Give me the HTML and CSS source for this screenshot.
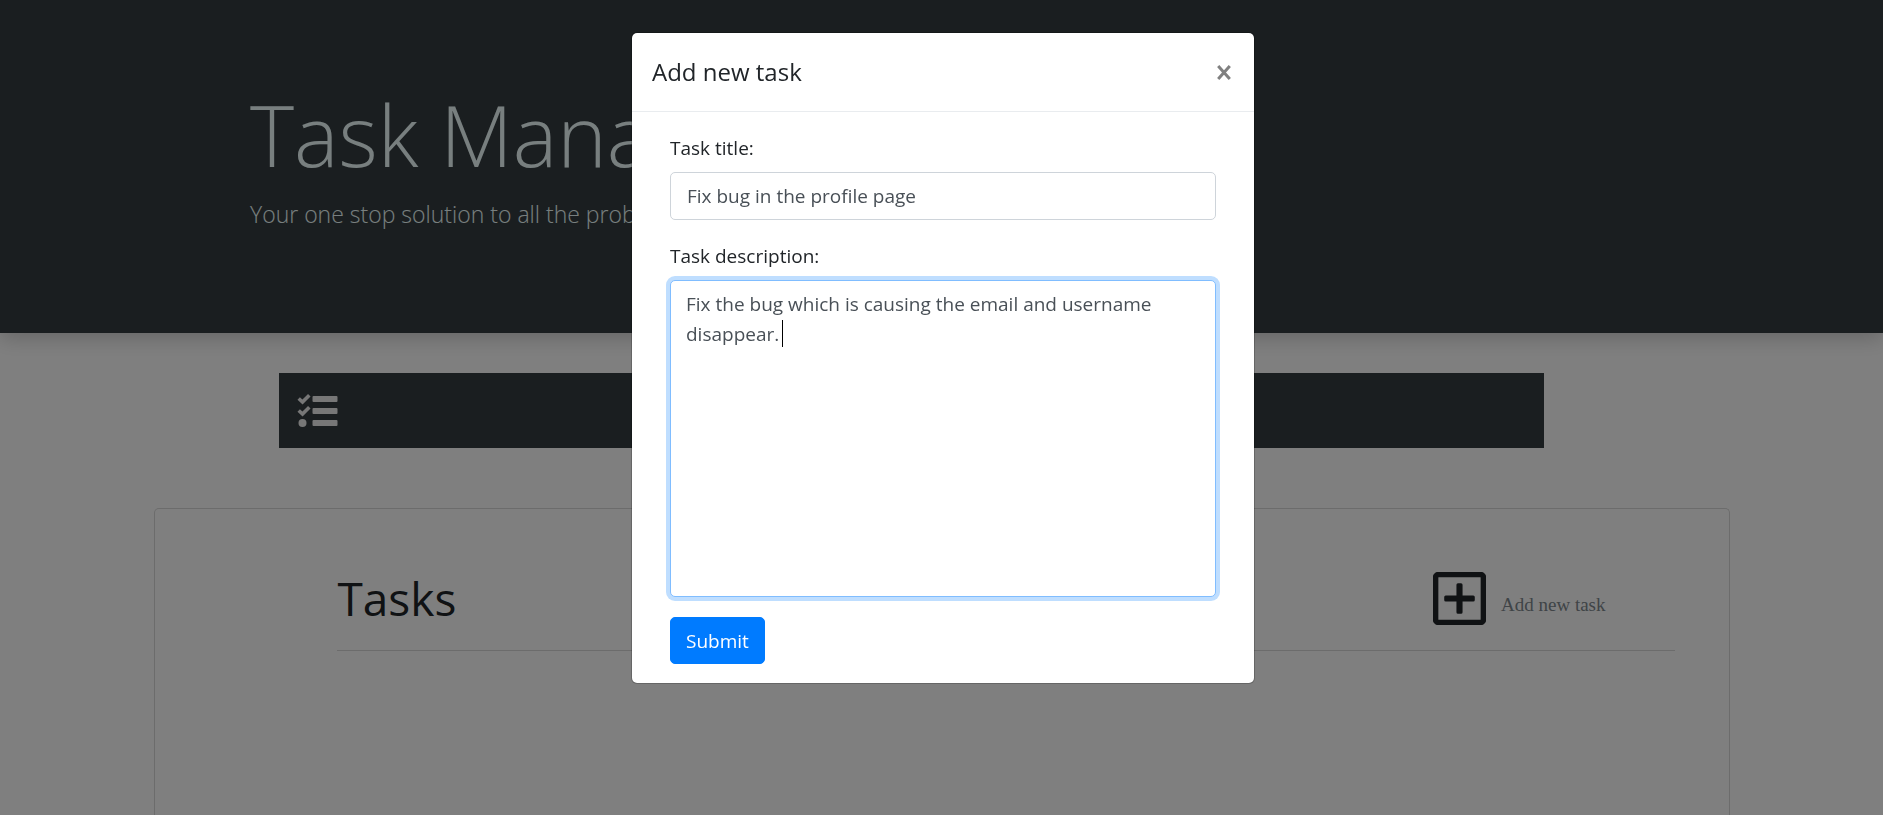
FILE: index.html
```html
<!DOCTYPE html>
<html lang="en">
<head>
<meta charset="utf-8">
<title>Task Manager</title>
<link rel="stylesheet" href="styles.css">
</head>
<body>
<header class="hero">
  <div class="hero-inner">
    <h1 class="hero-title">Task Manager</h1>
    <p class="hero-lead">Your one stop solution to all the problems</p>
  </div>
</header>
<nav class="navbar">
  <a class="brand" href="#" aria-label="Tasks">
    <svg class="brand-icon" viewBox="0 0 40 36" fill="currentColor">
      <rect x="15" y="3" width="25" height="6" rx="1"/>
      <rect x="15" y="15" width="25" height="6" rx="1"/>
      <rect x="15" y="27" width="25" height="6" rx="1"/>
      <circle cx="5" cy="30" r="4"/>
      <path d="M1.200 5.500 5 9 11.800 2.200M1.200 17.500 5 21 11.800 14.200" fill="none" stroke="currentColor" stroke-width="3.600"/>
    </svg>
  </a>
</nav>
<main class="card">
  <div class="card-head">
    <h2 class="card-title">Tasks</h2>
    <button class="add" type="button">
      <svg class="add-icon" viewBox="0 0 52 52">
        <rect x="2.500" y="2.500" width="47" height="47" rx="3" fill="none" stroke="currentColor" stroke-width="5.500"/>
        <path d="M12.500 23h10.500V12.500a1.500 1.500 0 0 1 1.500-1.500h3a1.500 1.500 0 0 1 1.500 1.500V23h10.500a1.500 1.500 0 0 1 1.500 1.500v3a1.500 1.500 0 0 1-1.500 1.500H29v10.500a1.500 1.500 0 0 1-1.500 1.500h-3a1.500 1.500 0 0 1-1.500-1.500V29H12.500a1.500 1.500 0 0 1-1.500-1.500v-3a1.500 1.500 0 0 1 1.500-1.500z" fill="currentColor"/>
      </svg>
      <span class="add-text">Add new task</span>
    </button>
  </div>
</main>
<div class="backdrop">
  <div class="modal" role="dialog" aria-labelledby="modal-title">
    <div class="modal-head">
      <h5 class="modal-title" id="modal-title">Add new task</h5>
      <button class="close" type="button" aria-label="Close">
        <svg class="close-icon" viewBox="0 0 14 14"><path d="M1.200 .5 12.800 13.500M12.800 .5 1.200 13.500" stroke="currentColor" stroke-width="3"/></svg>
      </button>
    </div>
    <form class="modal-body">
      <label class="label" for="title">Task title:</label>
      <input class="control" id="title" type="text" value="Fix bug in the profile page">
      <label class="label" for="description">Task description:</label>
      <div class="area">
        <textarea class="control control-area" id="description" spellcheck="false">Fix the bug which is causing the email and username disappear. </textarea>
        <span class="caret"></span>
      </div>
      <button class="submit" type="submit">Submit</button>
    </form>
  </div>
</div>
</body>
</html>
```
FILE: styles.css
```css
* { box-sizing: border-box; }
html, body { height: 100%; }
body {
  margin: 0;
  display: flex;
  flex-direction: column;
  overflow: hidden;
  background: #fff;
  color: #212529;
  font: 19px/30px "Open Sans", "Noto Sans", sans-serif;
}
h1, h2, h5, p { margin: 0; font-weight: 400; }
button, input, textarea { font: inherit; margin: 0; }

.hero {
  flex: none;
  padding: 80px 40px;
  background: #343c40;
  color: azure;
  box-shadow: 0 5px 20px rgba(0, 0, 0, .2);
}
.hero-inner { max-width: 1383px; margin: 0 auto; }
.hero-title { font-size: 84px; line-height: 110px; font-weight: 300; }
.hero-lead { margin-top: 6px; padding-bottom: 20px; font-size: 23px; line-height: 37px; font-weight: 300; }

.navbar {
  flex: none;
  margin: 40px 18% 0 14.8%;
  padding: 18px;
  background: #343c40;
}
.brand { display: flex; height: 39px; align-items: center; color: #eee; }
.brand-icon { width: 41px; height: 36px; }

.card {
  flex: 1 0 300px;
  min-height: 0;
  margin: 60px 8.1% 0 8.2%;
  padding: 60px 54px 0 182px;
  border: 1px solid #d8d8d8;
  border-bottom: 0;
  border-radius: 5px 5px 0 0;
}
.card-head {
  display: flex;
  justify-content: space-between;
  padding-bottom: 23px;
  border-bottom: 1px solid #d8d8d8;
}
.card-title { font-size: 46px; line-height: 58px; }
.add {
  display: flex;
  align-items: center;
  gap: 15px;
  margin-right: 70px;
  padding: 0;
  border: 0;
  background: none;
  color: #212529;
}
.add-icon { width: 53px; height: 53px; }
.add-text { padding-top: 14px; font: 19px/24px "Liberation Serif", serif; color: #80888e; }

.backdrop {
  position: fixed;
  inset: 0;
  padding: 32px 0 0 3px;
  background: rgba(0, 0, 0, .5);
}
.modal {
  max-width: 624px;
  margin: 0 auto;
  border: 1px solid rgba(0, 0, 0, .2);
  border-radius: 6px;
  background: #fff;
  background-clip: padding-box;
}
.modal-head {
  display: flex;
  justify-content: space-between;
  align-items: center;
  padding: 20px;
  border-bottom: 1px solid #e9ecef;
}
.modal-title { font-size: 24px; line-height: 38px; }
.close { display: flex; padding: 2px 3px; border: 0; background: none; color: #808080; }
.close-icon { width: 14px; height: 15px; }
.modal-body { display: flex; flex-direction: column; padding: 21px 38px 19px; }
.label { margin-bottom: 9px; }
.control {
  width: 100%;
  height: 48px;
  margin-bottom: 21px;
  padding: 8px 16px;
  border: 1px solid #ced4da;
  border-radius: 5px;
  background: #fff;
  color: #495057;
  outline: 0;
}
.area { position: relative; display: flex; margin-bottom: 20px; }
.control-area {
  height: 317px;
  margin: 0;
  padding: 8px 15px;
  resize: none;
  border-color: #80bdff;
  box-shadow: 0 0 0 4px #bfdeff;
}
.caret { position: absolute; left: 112px; top: 40px; width: 1px; height: 27px; background: #000; }
.submit {
  align-self: flex-start;
  height: 47px;
  padding: 8px 15px;
  border: 1px solid #007bff;
  border-radius: 5px;
  background: #007bff;
  color: #fff;
}
```
